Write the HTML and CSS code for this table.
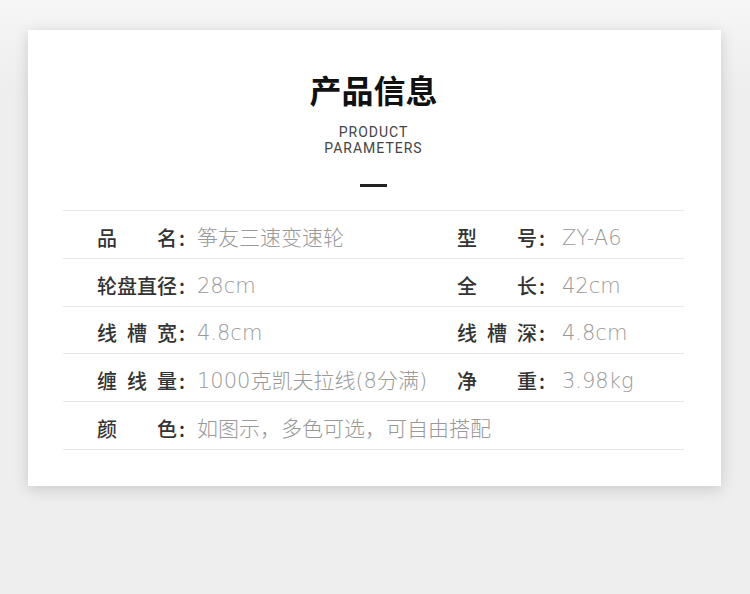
FILE: index.html
```html
<!DOCTYPE html>
<html lang="zh-CN">

<head>
    <meta charset="UTF-8" />
    <meta name="viewport" content="width=device-width, initial-scale=1" />
    <title>产品信息</title>
    <link rel="stylesheet" href="styles.css">
</head>

<body>
    <div class="info-card">
        <div class="info-header">
            <h2>产品信息</h2>
            <p class="sub-title">PRODUCT<br>PARAMETERS</p>
            <span class="dash"></span>
        </div>
        <div class="param-table">
            <div class="param-row">
                <div class="param"><span class="label">品名</span><span class="colon">:</span><span class="value">筝友三速变速轮</span></div>
                <div class="param"><span class="label">型号</span><span class="colon">:</span><span class="value">ZY-A6</span></div>
            </div>
            <div class="param-row">
                <div class="param"><span class="label">轮盘直径</span><span class="colon">:</span><span class="value">28cm</span></div>
                <div class="param"><span class="label">全长</span><span class="colon">:</span><span class="value">42cm</span></div>
            </div>
            <div class="param-row">
                <div class="param"><span class="label">线槽宽</span><span class="colon">:</span><span class="value">4.8cm</span></div>
                <div class="param"><span class="label">线槽深</span><span class="colon">:</span><span class="value">4.8cm</span></div>
            </div>
            <div class="param-row">
                <div class="param"><span class="label">缠线量</span><span class="colon">:</span><span class="value">1000克凯夫拉线(8分满)</span></div>
                <div class="param"><span class="label">净重</span><span class="colon">:</span><span class="value">3.98kg</span></div>
            </div>
            <div class="param-row">
                <div class="param wide"><span class="label">颜色</span><span class="colon">:</span><span class="value">如图示，多色可选，可自由搭配</span></div>
            </div>
        </div>
    </div>
</body>
</html>
```

FILE: styles.css
```css
* {
    box-sizing: border-box;
}

body {
    margin: 0;
    height: 594px;
    padding: 30px 29px 0 28px;
    font-family: "Noto Sans CJK SC", "Noto Sans", sans-serif;
    background: linear-gradient(#f6f6f6 0, #eeeeee 90px, #eeeeee 100%);
    overflow: hidden;
}

.info-card {
    height: 456px;
    padding: 37px 37px 0 35px;
    background: #fff;
    box-shadow: 0 3px 14px rgba(0, 0, 0, 0.16);
}

.info-header {
    display: flex;
    flex-direction: column;
    align-items: center;
}

h2 {
    margin: 0;
    font-size: 32px;
    line-height: 44px;
    font-weight: 700;
    color: #111;
}

.sub-title {
    margin: 13px 0 0;
    font-family: Roboto, "Liberation Sans", sans-serif;
    font-size: 14px;
    line-height: 16px;
    letter-spacing: 1px;
    text-align: center;
    color: #444;
}

.dash {
    width: 27px;
    height: 3px;
    margin-top: 28px;
    background: #222;
}

.param-table {
    margin-top: 23px;
    border-top: 1px solid #e6e6e6;
}

.param-row {
    display: grid;
    grid-template-columns: 360px 1fr;
    height: 47.8px;
    padding: 7px 0 0 34px;
    align-items: center;
    border-bottom: 1px solid #e6e6e6;
}

.param {
    display: flex;
    align-items: center;
    font-size: 20px;
    line-height: 28px;
    white-space: nowrap;
}

.param.wide {
    grid-column: 1 / 3;
}

.label {
    width: 80px;
    text-align: justify;
    text-align-last: justify;
    color: #333;
    font-weight: 500;
}

.colon {
    margin-left: 2px;
    color: #333;
    font-weight: 500;
}

.value {
    margin-left: 12px;
    font-family: "DejaVu Sans", "Noto Sans CJK SC", sans-serif;
    font-size: 21px;
    color: #999;
    font-weight: 300;
}

.param + .param .value {
    margin-left: 17px;
}
```
